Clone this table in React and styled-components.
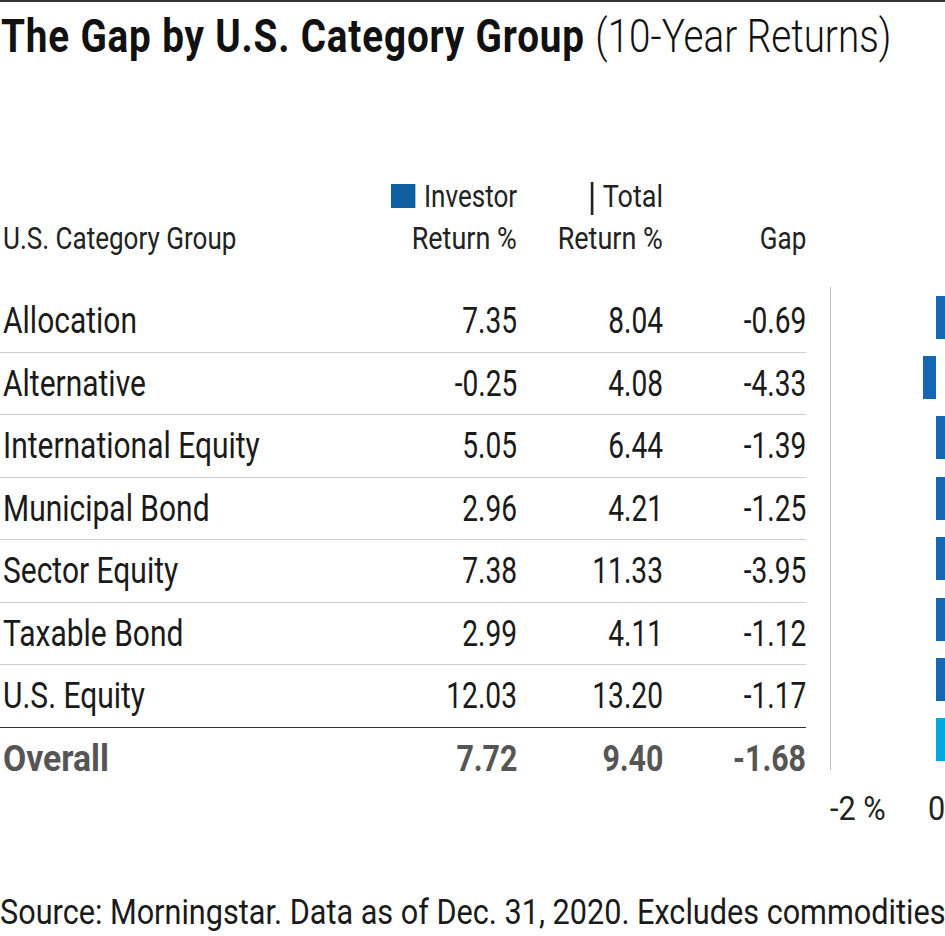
import React from "react";
import styled, { createGlobalStyle } from "styled-components";

const GlobalStyle = createGlobalStyle`
  body {
    margin: 0;
    background: #fff;
    color: #1a1a1a;
    font-family: Roboto, "Liberation Sans", sans-serif;
  }
`;

const K = 0.84; // horizontal squeeze to mimic the condensed face
const ZERO = 105; // px from the -2% gridline to zero
const SCALE = 52.5; // px per percentage point

const rows = [
  { name: "Allocation", investor: 7.35, total: 8.04, gap: -0.69 },
  { name: "Alternative", investor: -0.25, total: 4.08, gap: -4.33 },
  { name: "International Equity", investor: 5.05, total: 6.44, gap: -1.39 },
  { name: "Municipal Bond", investor: 2.96, total: 4.21, gap: -1.25 },
  { name: "Sector Equity", investor: 7.38, total: 11.33, gap: -3.95 },
  { name: "Taxable Bond", investor: 2.99, total: 4.11, gap: -1.12 },
  { name: "U.S. Equity", investor: 12.03, total: 13.2, gap: -1.17 },
];
const overall = { name: "Overall", investor: 7.72, total: 9.4, gap: -1.68 };

const Page = styled.div`
  width: 945px;
  height: 936px;
  box-sizing: border-box;
  border-top: 2px solid #333;
  display: flex;
  flex-direction: column;
  overflow: hidden;
`;

const Fit = styled.span`
  display: inline-block;
  white-space: nowrap;
  transform: scaleX(${(p) => p.$k || K});
  transform-origin: ${(p) => (p.$right ? "right" : "left")} center;
`;

const Title = styled.h1`
  margin: 9px 0 0 1px;
  font-size: 46px;
  line-height: 50px;
  font-weight: 700;
  white-space: nowrap;
  color: #111;
`;

const Strong = styled.span`
  letter-spacing: 1px;
`;

const Sub = styled.span`
  font-weight: 300;
  letter-spacing: 0;
`;

const Columns = styled.div`
  display: grid;
  grid-template-columns: 380px 137px 146px 143px;
`;

const Header = styled(Columns)`
  margin-top: 115px;
  font-size: 31px;
  line-height: 42px;
  color: #222;
`;

const HeadCell = styled.div`
  display: flex;
  flex-direction: column;
  justify-content: flex-end;
  align-items: ${(p) => (p.left ? "flex-start" : "flex-end")};
  padding-left: ${(p) => (p.left ? "3px" : "0")};
  white-space: nowrap;
`;

const Swatch = styled.span`
  display: inline-block;
  width: ${24 / K}px;
  height: 24px;
  margin-right: ${9 / K}px;
  background: #0d5f9f;
  vertical-align: -1px;
`;

const Tick = styled.span`
  display: inline-block;
  width: ${3 / 0.87}px;
  height: 33px;
  margin-right: ${9 / 0.87}px;
  background: #222;
  vertical-align: -8px;
`;

const Body = styled.div`
  display: flex;
  align-items: flex-start;
  margin-top: 30px;
`;

const Table = styled.div`
  width: 806px;
`;

const Row = styled(Columns)`
  height: 62.5px;
  box-sizing: border-box;
  border-bottom: ${(p) => (p.$strong ? "1.5px solid #333" : "1.5px solid #cfcfcf")};
  font-size: 37px;
  line-height: 62.5px;
  font-weight: ${(p) => (p.$total ? 700 : 400)};
  color: ${(p) => (p.$total ? "#555" : "#1a1a1a")};
  &:last-child {
    border-bottom: none;
  }
`;

const Label = styled.div`
  padding-left: 3px;
  white-space: nowrap;
`;

const Num = styled.div`
  text-align: right;
  white-space: nowrap;
`;

const Chart = styled.div`
  margin: -3px 0 0 24px;
  width: 115px;
`;

const Plot = styled.div`
  height: 483px;
  border-left: 1.5px solid #bdbdbd;
  display: flex;
  flex-direction: column;
  overflow: hidden;
`;

const BarSlot = styled.div`
  flex: 1;
  display: flex;
  align-items: center;
`;

const Bar = styled.div`
  height: 43px;
  flex-shrink: 0;
  background: ${(p) => (p.$total ? "#00a9e0" : "#1467b3")};
`;

const AxisLabels = styled.div`
  margin-top: 18px;
  display: flex;
  justify-content: space-between;
  font-size: 34px;
  line-height: 40px;
  color: #222;
  white-space: nowrap;
`;

const Source = styled.div`
  margin-top: auto;
  padding-bottom: 3px;
  font-size: 35px;
  line-height: 40px;
  color: #1a1a1a;
  white-space: nowrap;
`;

const fmt = (v) => v.toFixed(2);

const BarFor = ({ value, total }) => {
  const w = Math.abs(value) * SCALE;
  const left = value < 0 ? ZERO - w : ZERO;
  return (
    <BarSlot>
      <Bar $total={total} style={{ marginLeft: left, width: w }} />
    </BarSlot>
  );
};

export default function App() {
  const all = [...rows, overall];
  return (
    <>
      <GlobalStyle />
      <Page>
        <Title>
          <Fit>
            <Strong>The Gap by U.S. Category Group </Strong>
            <Sub>(10-Year Returns)</Sub>
          </Fit>
        </Title>

        <Header>
          <HeadCell left>
            <Fit>U.S. Category Group</Fit>
          </HeadCell>
          <HeadCell>
            <Fit $right>
              <Swatch />
              Investor
            </Fit>
            <Fit $right $k={0.87}>
              Return %
            </Fit>
          </HeadCell>
          <HeadCell>
            <Fit $right $k={0.87}>
              <Tick />
              Total
            </Fit>
            <Fit $right $k={0.87}>
              Return %
            </Fit>
          </HeadCell>
          <HeadCell>
            <Fit $right>Gap</Fit>
          </HeadCell>
        </Header>

        <Body>
          <Table>
            {all.map((r, i) => {
              const bold = r === overall;
              const nk = bold ? 0.82 : 0.76;
              return (
                <Row key={r.name} $strong={i === rows.length - 1} $total={bold}>
                  <Label>
                    <Fit $k={bold ? 0.91 : 0.81}>{r.name}</Fit>
                  </Label>
                  <Num>
                    <Fit $right $k={nk}>
                      {fmt(r.investor)}
                    </Fit>
                  </Num>
                  <Num>
                    <Fit $right $k={nk}>
                      {fmt(r.total)}
                    </Fit>
                  </Num>
                  <Num>
                    <Fit $right $k={nk}>
                      {fmt(r.gap)}
                    </Fit>
                  </Num>
                </Row>
              );
            })}
          </Table>
          <Chart>
            <Plot>
              {all.map((r) => (
                <BarFor key={r.name} value={r.investor} total={r === overall} />
              ))}
            </Plot>
            <AxisLabels>
              <Fit $k={0.9}>-2 %</Fit>
              <Fit $right $k={0.9}>
                0
              </Fit>
            </AxisLabels>
          </Chart>
        </Body>

        <Source>
          <Fit $k={0.875}>Source: Morningstar. Data as of Dec. 31, 2020. Excludes commodities</Fit>
        </Source>
      </Page>
    </>
  );
}
